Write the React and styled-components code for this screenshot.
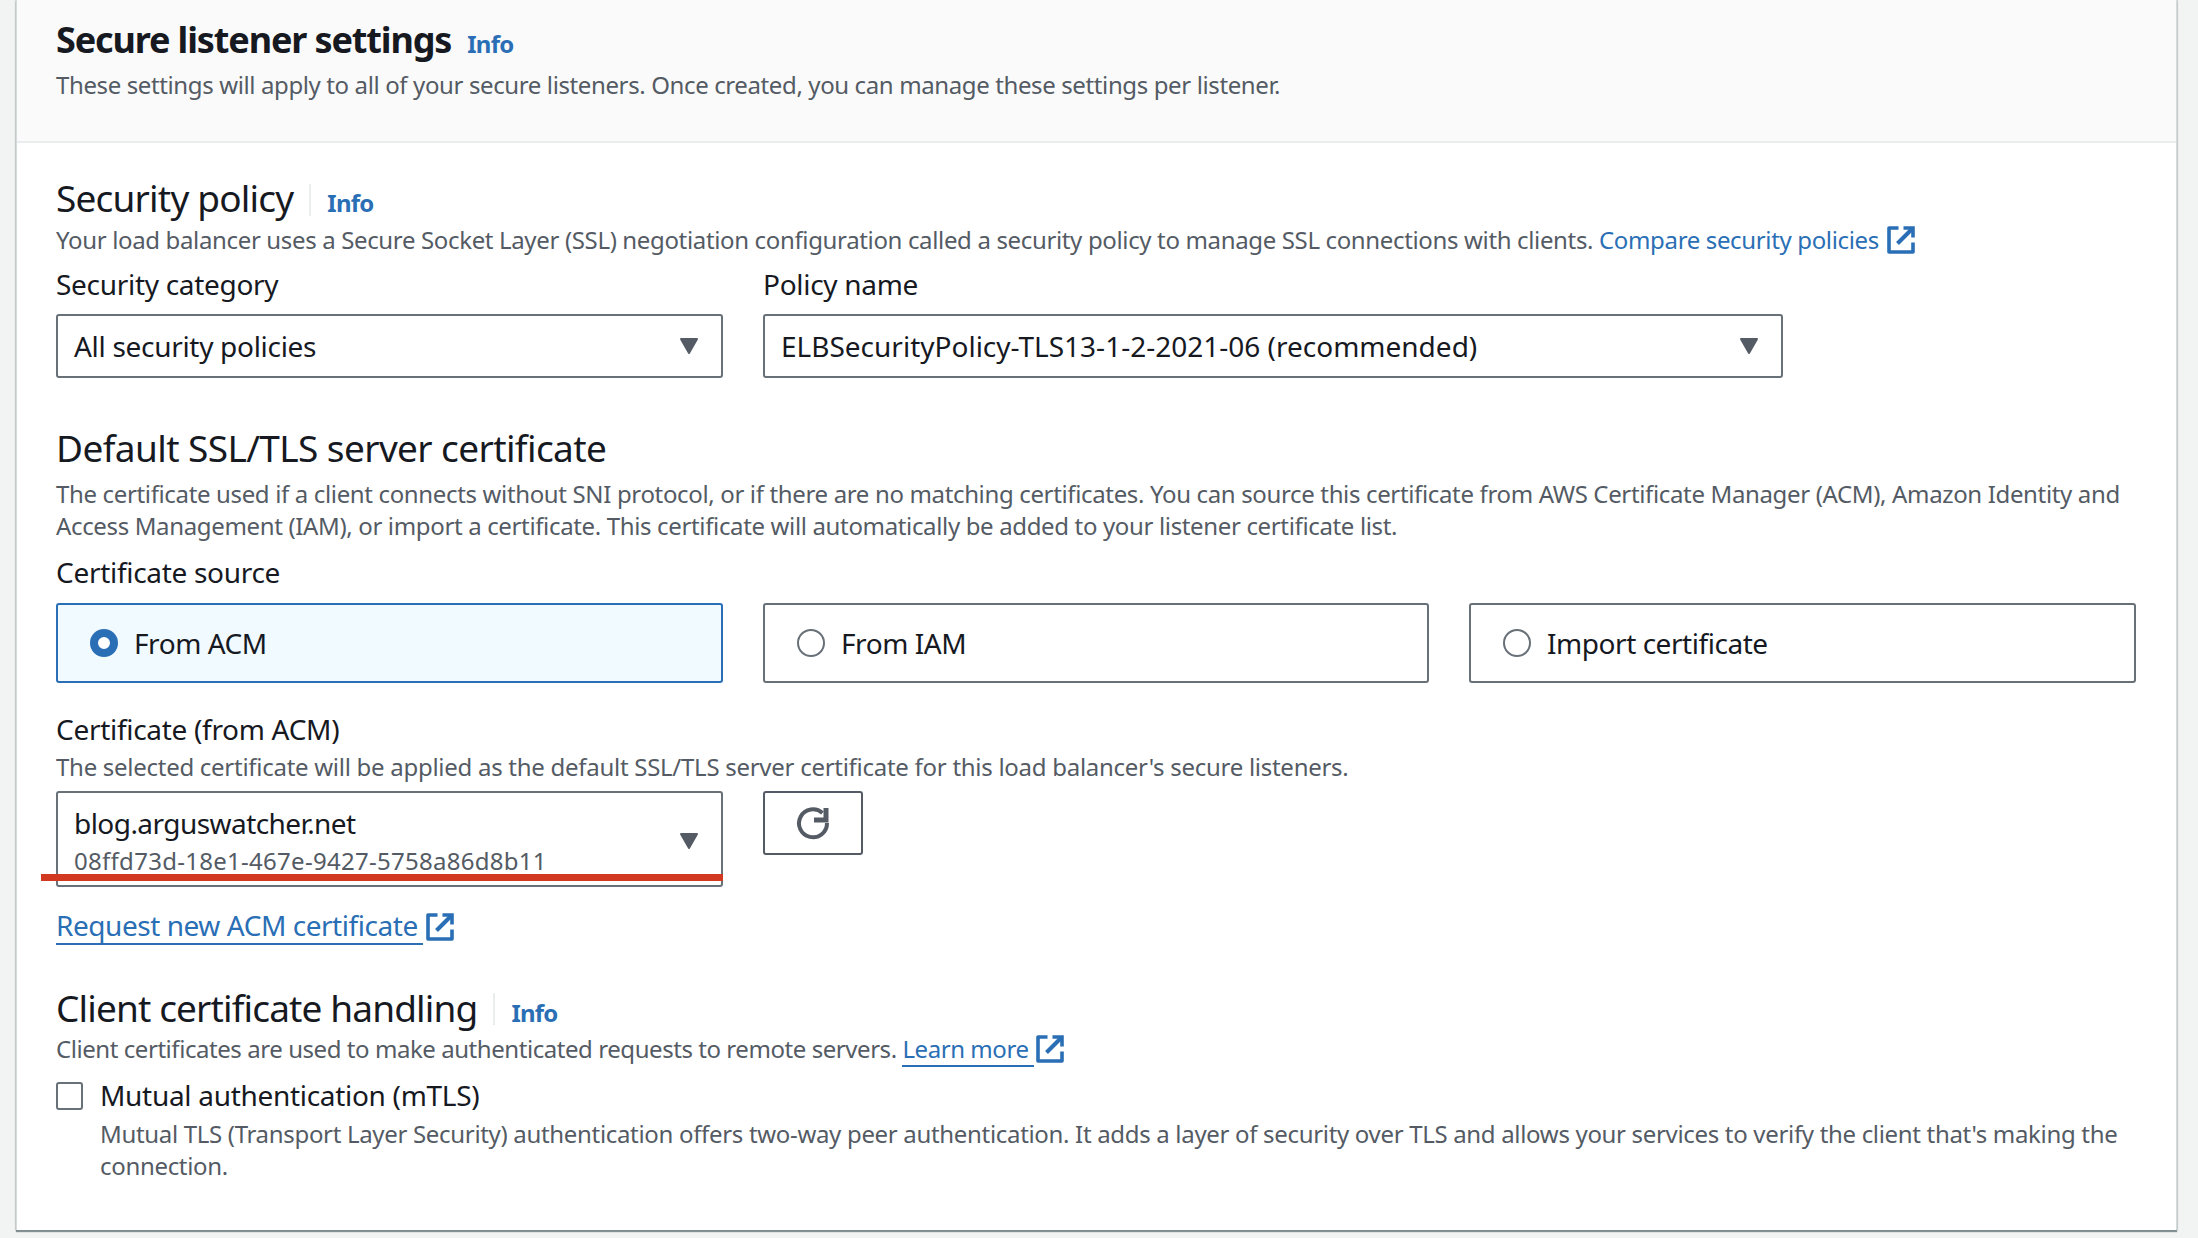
import React from "react";
import styled, { createGlobalStyle } from "styled-components";

const Global = createGlobalStyle`
  html, body { margin: 0; padding: 0; background: #f2f3f3; }
  body { font-family: "Noto Sans", "Open Sans", sans-serif; color: #16191f; overflow: hidden; }
`;
const Page = styled.div`
  width: 2198px; height: 1238px; padding: 0 21px 0 16px; box-sizing: border-box; overflow: hidden;
`;
const Card = styled.section`
  background: #fff; height: 1230px; border-left: 1px solid #d5dbdb; border-right: 1px solid #d5dbdb;
  box-shadow: 0 2px 1px rgba(0,28,36,.45), -1px 0 1px rgba(0,28,36,.12), 1px 0 1px rgba(0,28,36,.12);
  box-sizing: border-box;
`;
const CardHead = styled.header`
  background: #fafafa; height: 143px; box-sizing: border-box; border-bottom: 2px solid #eaeded; padding: 19px 39px 0;
`;
const CardTitleRow = styled.div`display: flex; align-items: baseline; gap: 16px; height: 50px;`;
const CardTitle = styled.h2`margin: 0; font-size: 36px; line-height: 42px; font-weight: 700; letter-spacing: -1.13px;`;
const Info = styled.a`color: #2a6fb5; font-size: 24px; font-weight: 700; line-height: 32px; letter-spacing: -0.75px;`;
const Body = styled.div`padding: 32px 39px 0;`;
const Desc = styled.p`margin: 0; font-size: 24px; line-height: 32px; color: #545b64; letter-spacing: ${p => p.$ls ?? -0.35}px;`;
const HeadRow = styled.div`display: flex; align-items: baseline; height: ${p => p.$h || 49}px; margin-top: ${p => p.$mt || 0}px;`;
const Heading = styled.h3`margin: 0; font-size: 37px; font-weight: 400; line-height: 46px; letter-spacing: ${p => p.$ls ?? -0.6}px;`;
const Sep = styled.span`
  width: 2px; height: 32px; background: #eaeded; margin: 0 16px; align-self: center;
`;
const Link = styled.a`color: #2a6fb5;`;
const UnderLink = styled.a`
  color: #2a6fb5; display: inline-block; line-height: ${p => p.$lh}px; padding-right: 5px; border-bottom: 2px solid #2a6fb5;
`;
const IconWrap = styled.svg`vertical-align: -5px; margin-left: ${p => p.$ml}px;`;
const ExtIcon = ({ ml = 8 }) => (
  <IconWrap $ml={ml} viewBox="0 0 28 28" width="28" height="28" fill="none" stroke="#2a6fb5" strokeWidth="3.6">
    <path d="M11.5 2H2v24h24V16.5" strokeLinejoin="round" strokeLinecap="butt" />
    <path d="M16.5 2H26v9.5" strokeLinejoin="miter" strokeLinecap="butt" />
    <path d="M25 3 10.5 17.5" strokeWidth="4" />
  </IconWrap>
);
const Row = styled.div`display: flex; gap: 40px; margin-top: ${p => p.$mt || 0}px; align-items: flex-start;`;
const Field = styled.div`width: ${p => p.$w}px; flex: none;`;
const Label = styled.div`font-size: 28px; line-height: 36px; margin-top: ${p => p.$mt || 0}px; letter-spacing: ${p => p.$ls ?? -0.3}px;`;
const Select = styled.div`
  position: relative; box-sizing: border-box; margin-top: ${p => p.$mt ?? 12}px; height: ${p => p.$h || 64}px; border: 2px solid #687078; border-radius: 3px;
  padding: 12px 16px 0; font-size: 28px; line-height: 36px; letter-spacing: ${p => p.$ls ?? -0.3}px; background: #fff;
`;
const Caret = styled.svg`position: absolute; right: 21px; top: ${p => p.$t}px;`;
const CaretIcon = ({ top }) => (
  <Caret $t={top} width="22" height="20" viewBox="0 0 22 20"><path d="M3 3h16L11 17z" fill="#545b64" stroke="#545b64" strokeWidth="2" strokeLinejoin="round"/></Caret>
);
const Tiles = styled.div`display: grid; grid-template-columns: 667px 666px 667px; gap: 40px; margin-top: 13px;`;
const Tile = styled.div`
  height: 80px; box-sizing: border-box; border: 2px solid ${p => p.$on ? "#2a6fb5" : "#687078"}; border-radius: 3px;
  background: ${p => p.$on ? "#f1faff" : "#fff"}; display: flex; align-items: center; padding-left: 32px; gap: 16px;
  font-size: 28px; letter-spacing: -0.45px;
`;
const Radio = styled.span`
  width: 28px; height: 28px; box-sizing: border-box; border-radius: 50%; flex: none;
  border: ${p => p.$on ? "8px solid #2a6fb5" : "2px solid #687078"}; background: #fff;
`;
const Sub = styled.div`font-size: 24px; line-height: 32px; color: #545b64; margin-top: 4px; letter-spacing: ${p => p.$ls ?? -0.275}px;`;
const RedLine = styled.div`
  position: absolute; left: -17px; right: -2px; bottom: 4px; height: 7px; background: #d13a21;
`;
const RefreshBtn = styled.button`
  width: 100px; height: 64px; box-sizing: border-box; border: 2px solid #545b64; border-radius: 3px; background: #fff; padding: 0;
  display: flex; align-items: center; justify-content: center;
`;
const CheckRow = styled.div`display: flex; gap: 17px; margin-top: 10px;`;
const Check = styled.span`
  width: 27px; height: 28px; box-sizing: border-box; border: 2px solid #687078; border-radius: 3px; flex: none; margin-top: 5px;
`;
const SubGap = styled.div`padding-top: 5px;`;

export default function App() {
  return (
    <Page>
      <Global />
      <Card>
        <CardHead>
          <CardTitleRow>
            <CardTitle>Secure listener settings</CardTitle>
            <Info>Info</Info>
          </CardTitleRow>
          <Desc $ls={-0.38}>These settings will apply to all of your secure listeners. Once created, you can manage these settings per listener.</Desc>
        </CardHead>
        <Body>
          <HeadRow>
            <Heading $ls={-0.8}>Security policy</Heading>
            <Sep />
            <Info>Info</Info>
          </HeadRow>
          <Desc>
            Your load balancer uses a Secure Socket Layer (SSL) negotiation configuration called a security policy to manage SSL connections with clients.{" "}
            <Link>Compare security policies</Link><ExtIcon />
          </Desc>
          <Row $mt={10}>
            <Field $w={667}>
              <Label>Security category</Label>
              <Select>All security policies<CaretIcon top={20} /></Select>
            </Field>
            <Field $w={1020}>
              <Label>Policy name</Label>
              <Select $ls={0}>ELBSecurityPolicy-TLS13-1-2-2021-06 (recommended)<CaretIcon top={20} /></Select>
            </Field>
          </Row>
          <HeadRow $mt={47} $h={53}>
            <Heading>Default SSL/TLS server certificate</Heading>
          </HeadRow>
          <Desc>The certificate used if a client connects without SNI protocol, or if there are no matching certificates. You can source this certificate from AWS Certificate Manager (ACM), Amazon Identity and Access Management (IAM), or import a certificate. This certificate will automatically be added to your listener certificate list.</Desc>
          <Label $mt={12}>Certificate source</Label>
          <Tiles>
            <Tile $on><Radio $on />From ACM</Tile>
            <Tile><Radio />From IAM</Tile>
            <Tile><Radio />Import certificate</Tile>
          </Tiles>
          <Label $mt={28}>Certificate (from ACM)</Label>
          <Sub>The selected certificate will be applied as the default SSL/TLS server certificate for this load balancer's secure listeners.</Sub>
          <Row $mt={8}>
            <Field $w={667}>
              <Select $mt={0} $h={96} $ls={-0.55}>
                blog.arguswatcher.net
                <Sub $ls={0.28}>08ffd73d-18e1-467e-9427-5758a86d8b11</Sub>
                <CaretIcon top={38} />
                <RedLine />
              </Select>
            </Field>
            <Field $w={100}>
              <RefreshBtn>
                <svg width="36" height="36" viewBox="0 0 36 36" fill="none" stroke="#545b64" strokeWidth="4">
                  <path d="M27.5 8A14 14 0 1 0 32 18" />
                  <path d="M31 3v12H19" strokeWidth="5" />
                </svg>
              </RefreshBtn>
            </Field>
          </Row>
          <Label $mt={20} $ls={-0.45}><UnderLink $lh={36}>Request new ACM certificate</UnderLink><ExtIcon ml={3} /></Label>
          <HeadRow $mt={40} $h={48}>
            <Heading $ls={-0.86}>Client certificate handling</Heading>
            <Sep />
            <Info>Info</Info>
          </HeadRow>
          <Desc $ls={-0.44}><span>Client certificates are used to make authenticated requests to remote servers. </span><UnderLink $lh={32}>Learn more</UnderLink><ExtIcon ml={2} /></Desc>
          <CheckRow>
            <Check />
            <div>
              <Label>Mutual authentication (mTLS)</Label>
              <SubGap>
                <Desc $ls={-0.32}>Mutual TLS (Transport Layer Security) authentication offers two-way peer authentication. It adds a layer of security over TLS and allows your services to verify the client that's making the connection.</Desc>
              </SubGap>
            </div>
          </CheckRow>
        </Body>
      </Card>
    </Page>
  );
}
